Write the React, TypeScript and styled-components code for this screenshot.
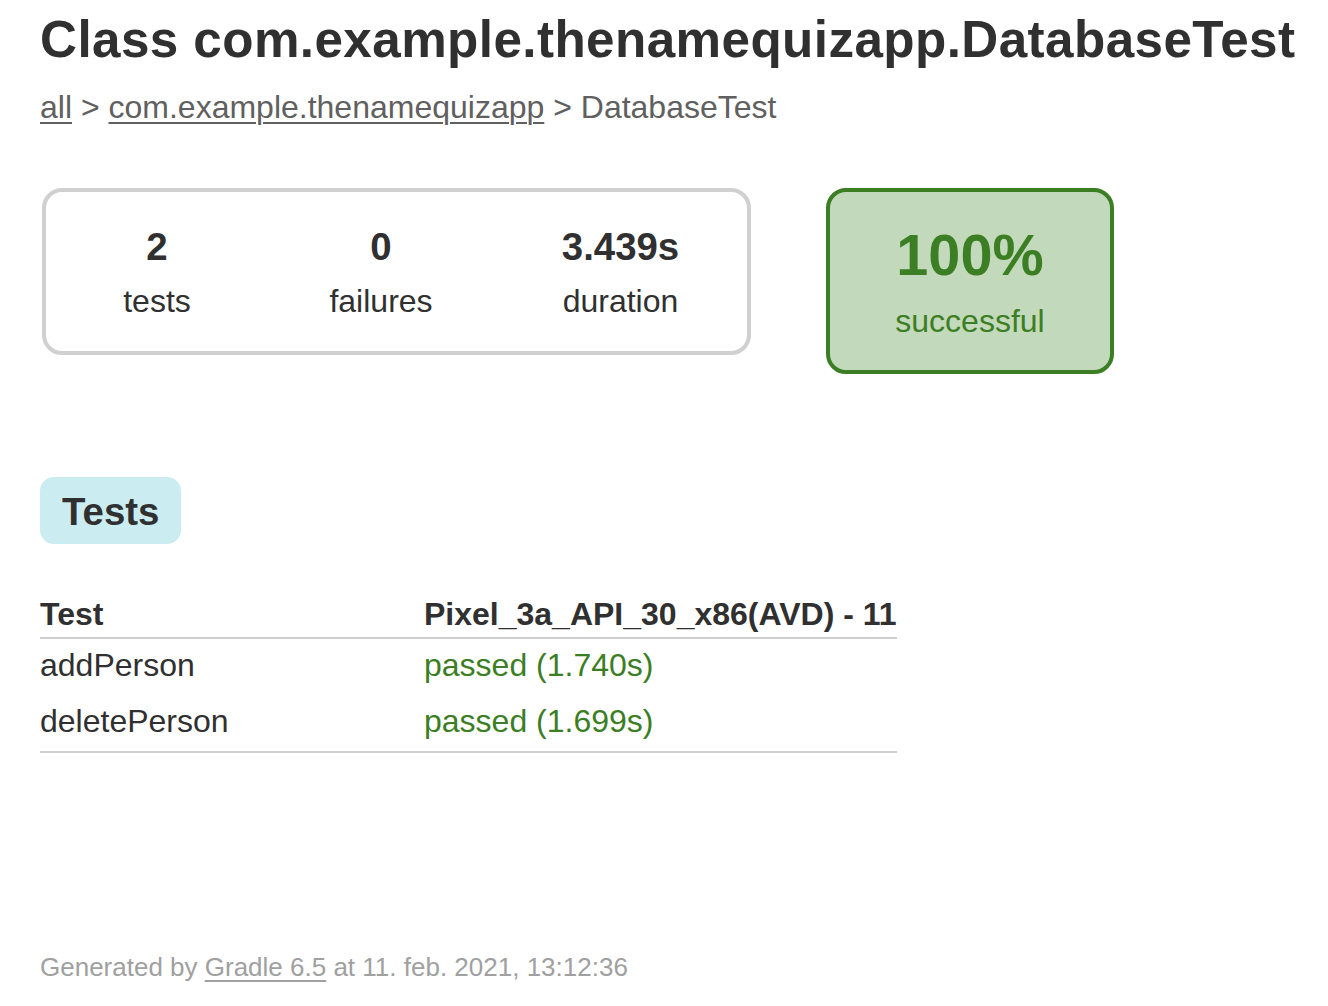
import React from "react";
import styled, { createGlobalStyle } from "styled-components";

const GlobalStyle = createGlobalStyle`
  html, body {
    margin: 0;
    padding: 0;
    background: #ffffff;
  }
  body {
    font-family: "Liberation Sans", Arial, Helvetica, sans-serif;
    font-size: 32px;
    color: #303030;
  }
`;

const GREEN = "#3b7e23";

const Page = styled.div`
  padding: 10px 40px 30px 40px;
`;

const Title = styled.h1`
  margin: 0;
  font-size: 51.2px;
  line-height: 59px;
  font-weight: bold;
  letter-spacing: 0.42px;
  color: #303030;
  white-space: nowrap;
`;

const Breadcrumbs = styled.div`
  margin-top: 20px;
  font-size: 32px;
  line-height: 37px;
  color: #606060;
  white-space: nowrap;
`;

const CrumbLink = styled.a`
  color: #606060;
  text-decoration: underline;
  text-decoration-thickness: 2px;
  text-underline-offset: 4px;
`;

const Summary = styled.div`
  margin-top: 62px;
  display: flex;
  align-items: flex-start;
`;

const SummaryGroup = styled.div`
  display: flex;
  border: 4px solid #d0d0d0;
  border-radius: 20px;
  margin-left: 2px;
`;

const InfoBox = styled.div<{ $width: number }>`
  width: ${(p) => p.$width}px;
  padding: 33px 0 31px;
  text-align: center;
`;

const Counter = styled.div`
  font-size: 38.4px;
  line-height: 44px;
  font-weight: bold;
  margin-bottom: 14px;
`;

const InfoLabel = styled.div`
  font-size: 32px;
  line-height: 37px;
`;

const SuccessRate = styled.div`
  margin-left: 75px;
  width: 280px;
  padding: 31px 0 30px;
  text-align: center;
  border: 4px solid ${GREEN};
  border-radius: 20px;
  background: #c3d9bc;
  color: ${GREEN};
`;

const Percent = styled.div`
  font-size: 57.6px;
  line-height: 64px;
  font-weight: bold;
  margin-bottom: 16px;
`;

const TabLinks = styled.ul`
  margin: 103px 0 0 0;
  padding: 0;
  list-style: none;
  display: flex;
`;

const TabItem = styled.li<{ $selected?: boolean }>`
  padding: 11px 20px 9px;
  border-radius: 14px;
  border: 2px solid ${(p) => (p.$selected ? "#cbedf2" : "#d4d4d4")};
  background: ${(p) => (p.$selected ? "#cbedf2" : "#f0f0f0")};
`;

const TabTitle = styled.h2`
  margin: 0;
  font-size: 38.4px;
  line-height: 43px;
  font-weight: bold;
  color: #303030;
`;

const Table = styled.table`
  margin-top: 52px;
  border-collapse: collapse;
  border-bottom: 2px solid #d0d0d0;
`;

const Th = styled.th<{ $first?: boolean }>`
  text-align: left;
  white-space: nowrap;
  padding: 0 0 4px;
  width: ${(p) => (p.$first ? "384px" : "auto")};
  font-size: 32px;
  line-height: 37px;
  font-weight: bold;
  border-bottom: 2px solid #d0d0d0;
`;

const Td = styled.td<{ $success?: boolean }>`
  white-space: nowrap;
  padding: 8px 0 12px;
  font-size: 32px;
  line-height: 36px;
  color: ${(p) => (p.$success ? GREEN : "#303030")};
`;

const Footer = styled.div`
  margin-top: 200px;
  font-size: 26px;
  line-height: 29px;
  color: #a0a0a0;
  white-space: nowrap;
`;

const FooterLink = styled.a`
  color: #a0a0a0;
  text-decoration: underline;
  text-decoration-thickness: 2px;
  text-underline-offset: 4px;
`;

const infos = [
  { value: "2", label: "tests", width: 222 },
  { value: "0", label: "failures", width: 226 },
  { value: "3.439s", label: "duration", width: 253 },
];

const tests = [
  { name: "addPerson", result: "passed (1.740s)" },
  { name: "deletePerson", result: "passed (1.699s)" },
];

export default function App() {
  return (
    <>
      <GlobalStyle />
      <Page>
        <Title>Class com.example.thenamequizapp.DatabaseTest</Title>
        <Breadcrumbs>
          <CrumbLink href="#">all</CrumbLink> &gt;{" "}
          <CrumbLink href="#">com.example.thenamequizapp</CrumbLink> &gt; DatabaseTest
        </Breadcrumbs>
        <Summary>
          <SummaryGroup>
            {infos.map((i) => (
              <InfoBox key={i.label} $width={i.width}>
                <Counter>{i.value}</Counter>
                <InfoLabel>{i.label}</InfoLabel>
              </InfoBox>
            ))}
          </SummaryGroup>
          <SuccessRate>
            <Percent>100%</Percent>
            <InfoLabel>successful</InfoLabel>
          </SuccessRate>
        </Summary>
        <TabLinks>
          <TabItem $selected>
            <TabTitle>Tests</TabTitle>
          </TabItem>
        </TabLinks>
        <Table>
          <thead>
            <tr>
              <Th $first>Test</Th>
              <Th>Pixel_3a_API_30_x86(AVD) - 11</Th>
            </tr>
          </thead>
          <tbody>
            {tests.map((t) => (
              <tr key={t.name}>
                <Td>{t.name}</Td>
                <Td $success>{t.result}</Td>
              </tr>
            ))}
          </tbody>
        </Table>
        <Footer>
          Generated by <FooterLink href="#">Gradle 6.5</FooterLink> at 11. feb. 2021, 13:12:36
        </Footer>
      </Page>
    </>
  );
}
